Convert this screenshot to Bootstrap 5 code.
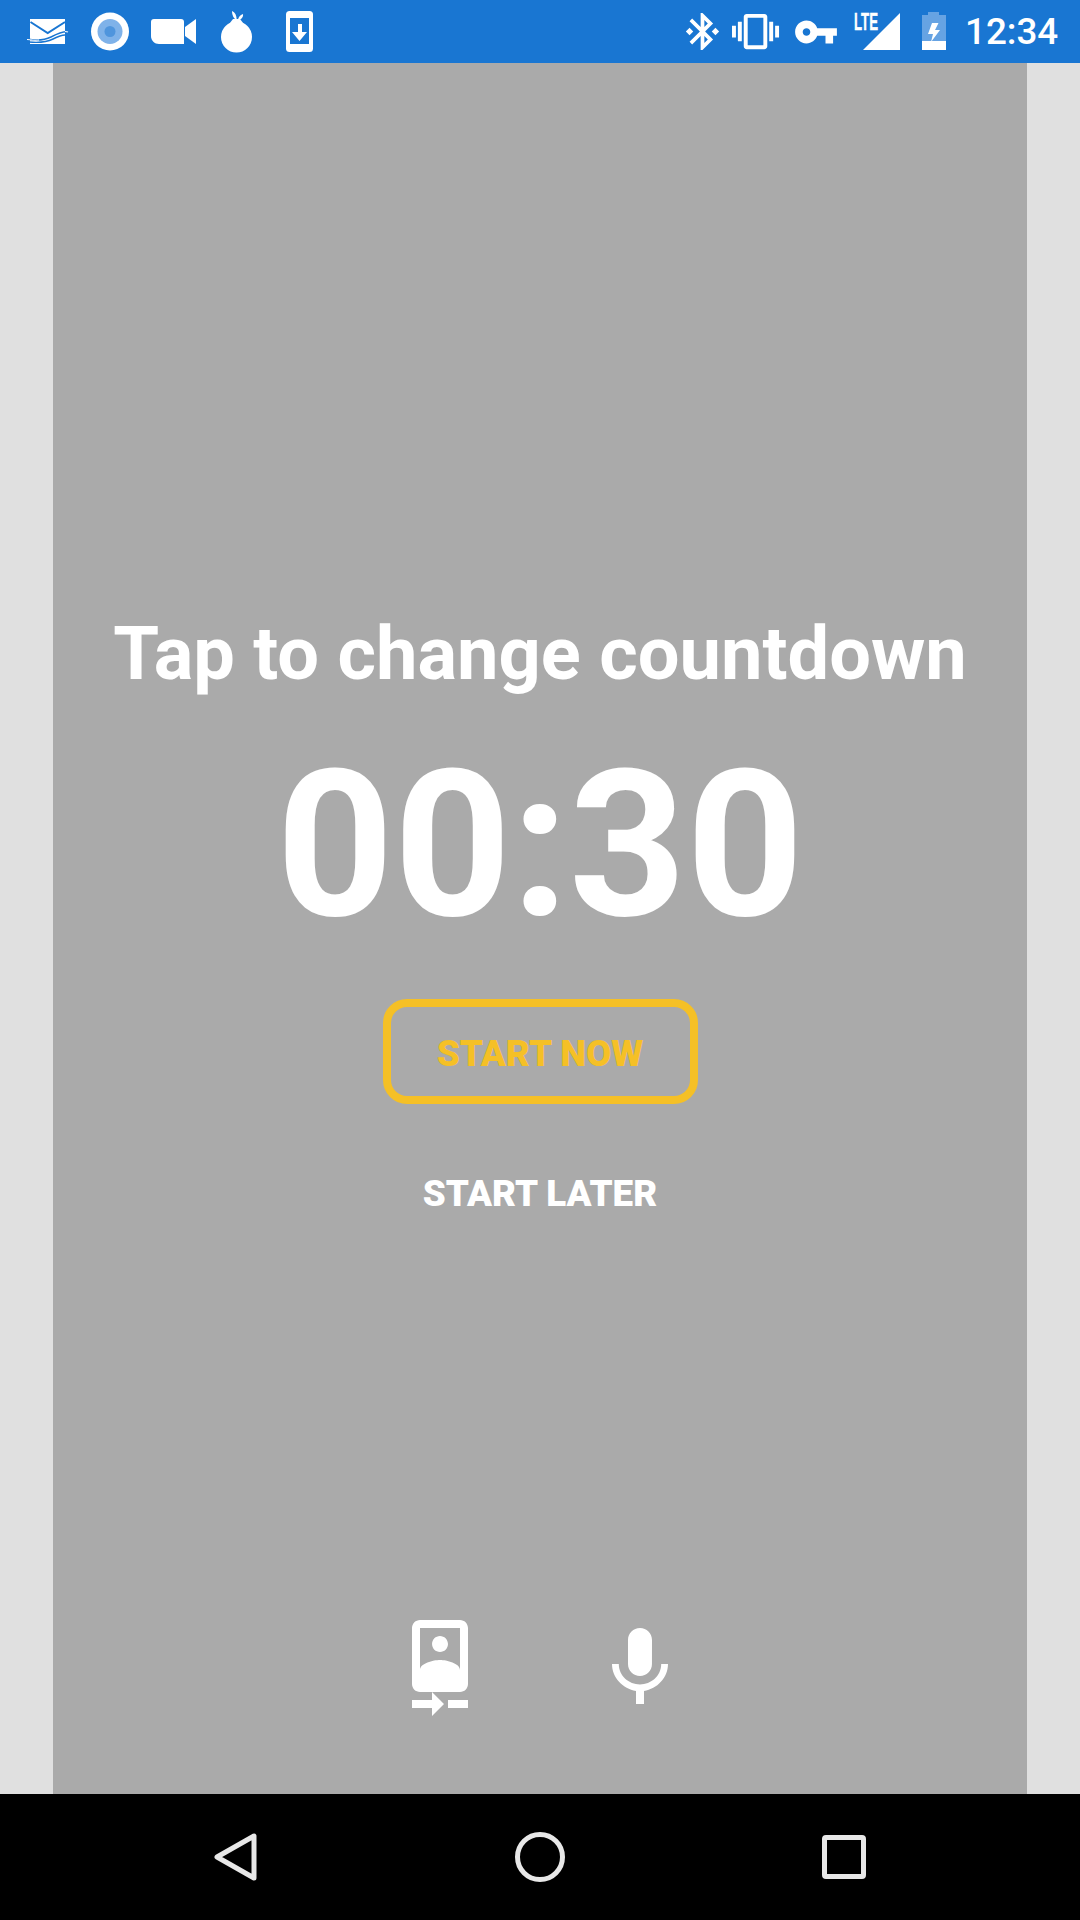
<!DOCTYPE html>
<html lang="en">
<head>
  <meta charset="UTF-8">
  <title>Countdown</title>
  <link href="https://cdn.jsdelivr.net/npm/bootstrap@5.3.3/dist/css/bootstrap.min.css" rel="stylesheet">
  <style>
    body { background: #e0e0e0; font-family: Roboto, "Liberation Sans", sans-serif; }
    .status-strip { height: 63px; background: #1976d2; padding-left: 16px; }
    .status-time { width: 117px; font-size: 36.75px; font-weight: 500; line-height: 63px; color: #fff; padding-left: 2px; }
    .lte-label { font-family: "Liberation Sans", sans-serif; font-weight: 700; font-size: 23px; fill: #fff; stroke: #fff; stroke-width: .4px; }
    .stage { width: 974px; background: #aaaaaa; }
    .stage-body { padding-top: 535px; }
    .count-title { font-size: 74px; line-height: 112px; font-weight: 700; color: #fff; margin: 0; }
    .count-time { font-size: 204.75px; line-height: 232px; font-weight: 700; color: #fff; margin-top: 19px; }
    .btn.start-now { width: 315px; height: 105px; margin-top: 38px; border: 8px solid #f5c026; border-radius: 24px; background: transparent; color: #f5c026; font-size: 36.75px; font-weight: 900; padding: 4px 0 0; }
    .btn.start-later { margin-top: 57px; padding: 0; border: 0; color: #fff; font-size: 36.75px; line-height: 66px; font-weight: 900; }
    .stage-tools { gap: 104px; padding-bottom: 78px; }
    .nav-strip { height: 126px; background: #000; }
  </style>
</head>
<body class="vh-100 d-flex flex-column overflow-hidden">
  <div class="status-strip d-flex align-items-center flex-shrink-0">
    <svg width="63" height="63" viewBox="16 0 63 63" fill="#fff">
      <path d="M30 19h35v25H30z"/>
      <path d="M30.500 22 47.700 33 65 22" fill="none" stroke="#1976d2" stroke-width="2"/>
      <path d="M27 39c10 2 18 1 24-2s12-6 17-5M29 42c10 1 18 0 24-3s8-4 12-4" fill="none" stroke="#1976d2" stroke-width="1.500"/>
      <path d="M27 39.500c6 .5 8 1 12 .5" fill="none" stroke="#fff" stroke-width="1"/>
      <path d="M65 31.500c1 0 2 0 3 .5" fill="none" stroke="#fff" stroke-width="1.200"/>
    </svg>
    <svg width="63" height="63" viewBox="79 0 63 63">
      <circle cx="110" cy="31.500" r="19" fill="#fff"/>
      <circle cx="110" cy="31.500" r="12.500" fill="#7fb2e9"/>
      <circle cx="110" cy="31.500" r="5.500" fill="#4f95dd"/>
    </svg>
    <svg width="63" height="63" viewBox="142 0 63 63" fill="#fff">
      <path d="M154 19h27a3 3 0 0 1 3 3v22h-25c-4.500 0-8-3.500-8-8V22a3 3 0 0 1 3-3z"/>
      <path d="M185 27l11-8v25l-11-8z"/>
    </svg>
    <svg width="63" height="63" viewBox="205 0 63 63" fill="#fff">
      <circle cx="236.500" cy="37" r="15.500"/>
      <path d="M233 19h7l7 9h-21z"/>
      <path d="M232 11c3 1 4.500 4 4.800 9-3-1-4.800-5-4.800-9zM243 14c.5 3-1.500 5.500-5 6.500 0-3 2-5.500 5-6.500z"/>
    </svg>
    <svg width="63" height="63" viewBox="268 0 63 63">
      <rect x="286" y="11" width="27" height="41" rx="3.500" fill="#fff"/>
      <rect x="290" y="18" width="19" height="26" fill="#1976d2"/>
      <path d="M298 24h4v8h5l-7.500 9-7.500-9h6z" fill="#fff"/>
    </svg>
    <div class="ms-auto d-flex align-items-center">
      <svg width="53" height="63" viewBox="676 0 53 63" fill="#fff">
        <path transform="translate(680.300 9.300) scale(1.850)" d="M7 12l-2-2-2 2 2 2 2-2zm10.710-4.290L12 2h-1v7.590L6.410 5 5 6.410 10.590 12 5 17.590 6.410 19 11 14.410V22h1l5.710-5.710-4.300-4.290 4.300-4.290zM13 5.830l1.880 1.880L13 9.590V5.830zm1.880 10.460L13 18.170v-3.760l1.880 1.880zM19 10l-2 2 2 2 2-2-2-2z"/>
      </svg>
      <svg width="53" height="63" viewBox="729 0 53 63" fill="#fff">
        <path transform="translate(732 8) scale(1.960)" d="M0 15h2V9H0v6zm3 2h2V7H3v10zm19-8v6h2V9h-2zm-3 8h2V7h-2v10zM16.500 3h-9C6.670 3 6 3.670 6 4.500v15c0 .83.67 1.500 1.500 1.500h9c.83 0 1.500-.67 1.500-1.500v-15c0-.83-.67-1.500-1.500-1.500zM16 19H8V5h8v14z"/>
      </svg>
      <svg width="68" height="63" viewBox="782 0 68 63" fill="#fff">
        <path transform="translate(793.200 9.200) scale(1.900)" d="M12.650 10C11.830 7.670 9.610 6 7 6c-3.310 0-6 2.690-6 6s2.690 6 6 6c2.610 0 4.830-1.670 5.650-4H17v4h4v-4h2v-4H12.650zM7 14c-1.100 0-2-.9-2-2s.9-2 2-2 2 .9 2 2-.9 2-2 2z"/>
      </svg>
      <svg width="55" height="63" viewBox="850 0 55 63">
        <path d="M900 13v37h-37z" fill="#fff"/>
        <text class="lte-label" x="854" y="30" textLength="24" lengthAdjust="spacingAndGlyphs">LTE</text>
      </svg>
      <svg width="58" height="63" viewBox="905 0 58 63">
        <path d="M928 12h11v3h7v35h-24V15h6z" fill="#66a3e3"/>
        <path d="M922 41h24v9h-24z" fill="#fff"/>
        <path d="M932 23h6.500l-3.500 7h5l-9 12 2-8h-5z" fill="#fff"/>
      </svg>
      <span class="status-time">12:34</span>
    </div>
  </div>

  <div class="flex-grow-1 d-flex justify-content-center">
    <div class="stage d-flex flex-column align-items-center">
      <div class="stage-body flex-grow-1 d-flex flex-column align-items-center">
        <h1 class="count-title">Tap to change countdown</h1>
        <div class="count-time">00:30</div>
        <button class="btn start-now" type="button">START NOW</button>
        <button class="btn start-later" type="button">START LATER</button>
      </div>
      <div class="stage-tools d-flex justify-content-center">
        <svg width="96" height="96" viewBox="0 0 24 24" fill="#fff">
          <path d="M10 20H5v2h5v2l3-3-3-3v2zm4 0v2h5v-2h-5zM12 8c1.100 0 2-.9 2-2s-.9-2-2-2-1.990.9-1.990 2S10.900 8 12 8zm5-8H7C5.900 0 5 .9 5 2v14c0 1.100.9 2 2 2h10c1.100 0 2-.9 2-2V2c0-1.100-.9-2-2-2zM7 2h10v10.500c0-1.670-3.330-2.500-5-2.500s-5 .83-5 2.500V2z"/>
        </svg>
        <svg width="96" height="96" viewBox="0 0 24 24" fill="#fff">
          <path d="M12 14c1.660 0 2.990-1.340 2.990-3L15 5c0-1.660-1.340-3-3-3S9 3.340 9 5v6c0 1.660 1.340 3 3 3zm5.300-3c0 3-2.540 5.100-5.300 5.100S6.700 14 6.700 11H5c0 3.410 2.720 6.230 6 6.720V21h2v-3.280c3.280-.48 6-3.300 6-6.720h-1.700z"/>
        </svg>
      </div>
    </div>
  </div>

  <div class="nav-strip flex-shrink-0 d-flex align-items-center justify-content-center">
    <svg width="1080" height="126" viewBox="0 1794 1080 126" fill="none" stroke="#e8e8e8" stroke-width="5" stroke-linejoin="round">
      <path d="M254 1836v42l-37-21z"/>
      <circle cx="540" cy="1857" r="22.500"/>
      <rect x="824.500" y="1837.500" width="39" height="39" rx="1.500"/>
    </svg>
  </div>

  <script src="https://cdn.jsdelivr.net/npm/bootstrap@5.3.3/dist/js/bootstrap.bundle.min.js"></script>
</body>
</html>
